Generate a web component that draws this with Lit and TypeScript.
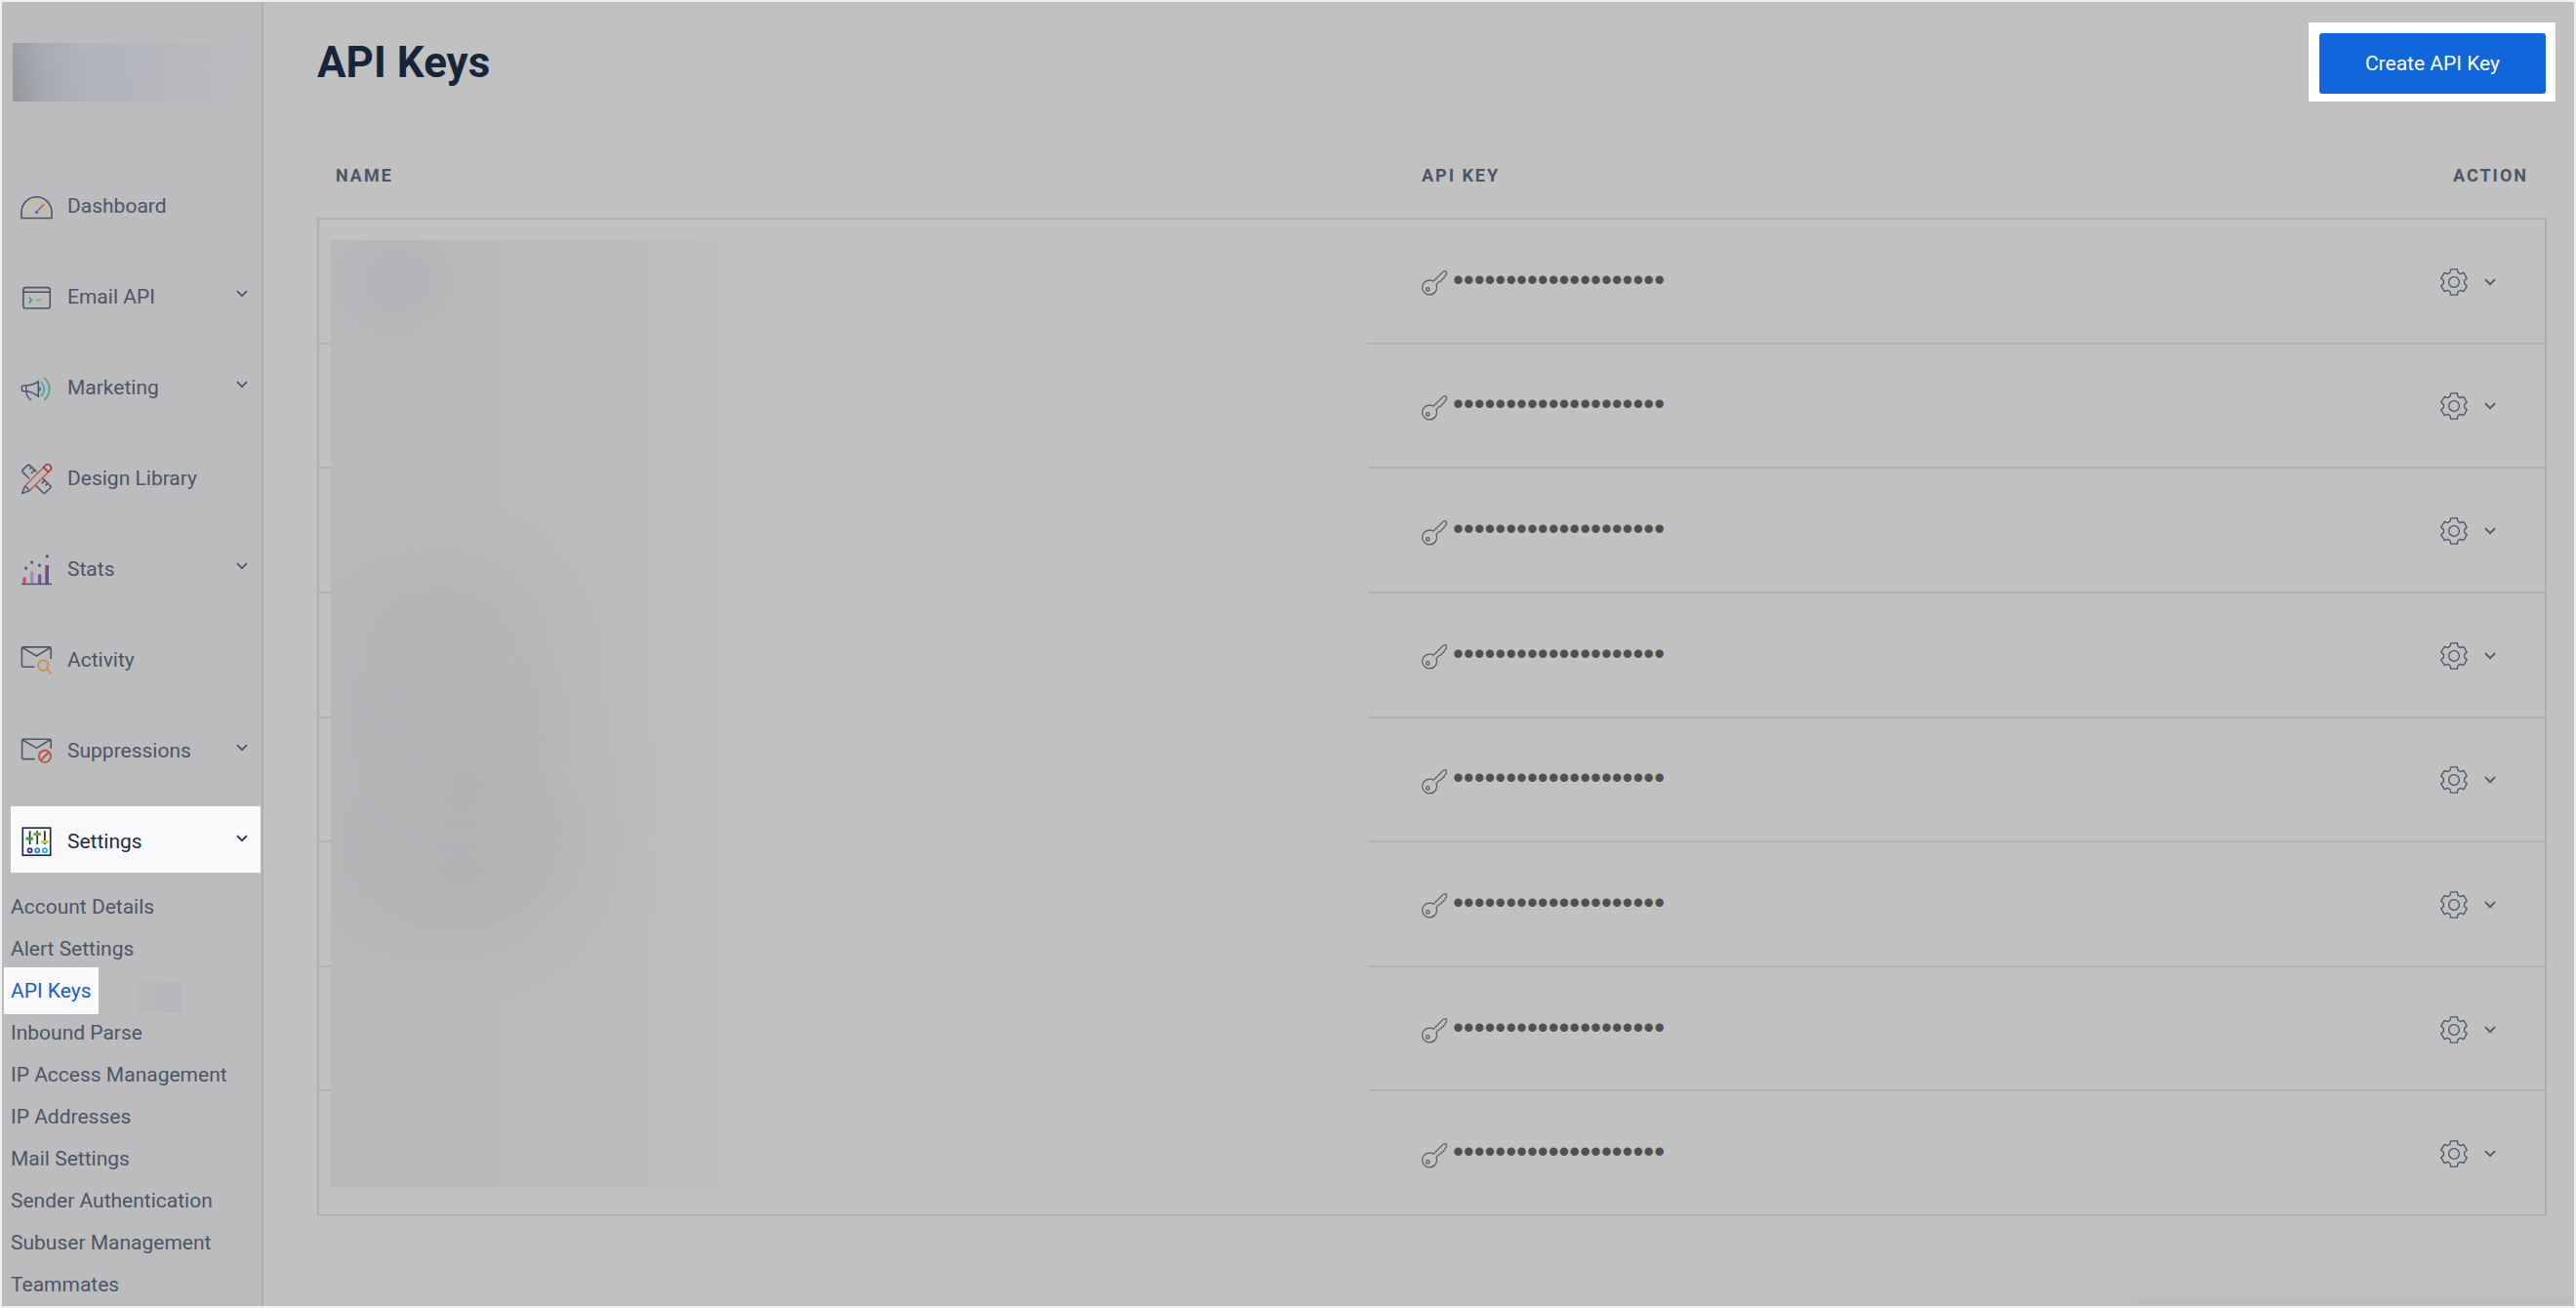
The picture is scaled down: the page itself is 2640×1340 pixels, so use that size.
import { LitElement, html, css, svg, nothing } from "lit";
import { customElement, property, state } from "lit/decorators.js";
import { classMap } from "lit/directives/class-map.js";

const ink = "#4b5666";

const icons: Record<string, unknown> = {
  dashboard: svg`
    <path d="M1 29.5V23.5A15.5 15.75 0 0 1 32 23.5V29.5Z" fill="none" stroke=${ink} stroke-width="1.6"/>
    <g fill="#d9c24a"><circle cx="5.7" cy="24" r="1.3"/><circle cx="6.8" cy="19.3" r="1"/><circle cx="9.2" cy="16" r="1"/><circle cx="12.3" cy="13.4" r="1.1"/><circle cx="16.4" cy="12.6" r="1.6"/><circle cx="20.4" cy="13.4" r="1.1"/><circle cx="26" cy="19.3" r="1"/><circle cx="27.3" cy="24" r="1.3"/></g>
    <path d="M16.4 23.2L24 15.4" stroke="#c25a4e" stroke-width="1.6"/>
    <circle cx="16.4" cy="23.4" r="1.7" fill="#3f74c4"/>`,
  email: svg`
    <rect x="2.9" y="7.6" width="27.4" height="21.2" rx="2.4" fill="none" stroke=${ink} stroke-width="1.6"/>
    <path d="M3 12.2H30" stroke=${ink} stroke-width="1.6"/>
    <path d="M8.6 17.6L11.4 20.5L8.6 23.4" fill="none" stroke="#35a35c" stroke-width="1.7"/>
    <path d="M15.3 20.5H21.3" stroke="#7fb044" stroke-width="1.5"/>`,
  marketing: svg`
    <path d="M5.8 15V20.5C6 25 8 28 11.2 29.8" fill="none" stroke="#5a4fa0" stroke-width="1.5"/>
    <path d="M5.8 14.9H3C1.8 14.9 1.4 15.6 1.4 16.6V19C1.4 20.2 2 20.8 3 20.8H5.8" fill="none" stroke=${ink} stroke-width="1.5"/>
    <path d="M5.8 14.9C10 14.6 14.6 13.4 18.3 10.8V26.2C14.6 23.2 10 21.2 5.8 20.8" fill="none" stroke=${ink} stroke-width="1.5"/>
    <path d="M18.9 16.2A2.4 2.4 0 0 1 18.9 21Z" fill="#3f74c4"/>
    <path d="M21 11.3Q27.6 18.6 21 26" fill="none" stroke="#4a9db0" stroke-width="1.5"/>
    <path d="M24.4 6.8Q35 18.4 24.4 30" fill="none" stroke="#45a765" stroke-width="1.6"/>`,
  design: svg`
    <g fill="none" stroke=${ink} stroke-width="1.5" stroke-linejoin="round">
      <path d="M9 17.2L2 10.4Q1.2 9.4 2 8.6L7.6 3.4Q8.6 2.8 9.4 3.6L16.4 10.4"/>
      <path d="M15.6 24.4L23.4 32Q24.3 32.8 25.2 32L30.6 26.8Q31.4 25.8 30.6 24.8L23 17.2"/>
      <path d="M11.2 5.8L9.2 7.8M14.2 8.8L11 12M24.6 19.4L21.6 22.4M27.6 22.4L25.6 24.4"/>
      <path d="M4.7 24.8L1.6 32.6L9.4 29.6M4.7 24.8L9.4 29.6"/>
    </g>
    <g fill="none" stroke="#c5604f" stroke-width="1.5"><path d="M4.7 24.8L23.6 5.7L28.6 10.6L9.4 29.6"/></g>
    <path d="M23.6 5.7L25.7 3.6Q28 1.8 30.4 3.8Q32.6 6.2 30.7 8.5L28.6 10.6Z" fill="none" stroke="#9f4344" stroke-width="1.7"/>`,
  stats: svg`
    <rect x="2.4" y="25.3" width="3.3" height="6.6" fill="#cb4a72"/><rect x="10.1" y="19.3" width="3.2" height="12.6" fill="#ae85b8"/>
    <rect x="18.1" y="22.3" width="3.2" height="9.6" fill="#6a4fc0"/><rect x="25.4" y="13" width="3.5" height="18.9" fill="#77458f"/>
    <path d="M1 32.4H32" stroke=${ink} stroke-width="1.5"/>
    <g fill=${ink}><circle cx="5.6" cy="16.1" r="1.6"/><circle cx="11.7" cy="10.1" r="1.6"/><circle cx="19.5" cy="13.1" r="1.6"/><circle cx="27.3" cy="3.8" r="1.6"/></g>`,
  activity: svg`
    <path d="M31.2 16V5.4Q31.2 3.9 29.7 3.9H3Q1.4 3.9 1.4 5.4V22.6Q1.4 24.2 3 24.2H14.3M2 4.4L16.4 13L30.7 4.4" fill="none" stroke=${ink} stroke-width="1.6"/>
    <circle cx="23.3" cy="22.6" r="5.2" fill="none" stroke="#d08b45" stroke-width="1.8"/>
    <path d="M27 26.3L31.6 31" stroke="#d08b45" stroke-width="1.8"/>`,
  suppressions: svg`
    <path d="M31.2 14.8V6.6Q31.2 5.2 29.7 5.2H3Q1.6 5.2 1.6 6.6V24.2Q1.6 25.6 3 25.6H14.6M2 5.8L16.4 14.4L30.7 5.8" fill="none" stroke=${ink} stroke-width="1.6"/>
    <circle cx="24.9" cy="22.8" r="6.1" fill="none" stroke="#be5347" stroke-width="1.9"/>
    <path d="M20.8 27L29 18.6" stroke="#be5347" stroke-width="1.9"/>`,
  settings: svg`
    <rect x="2.3" y="3.2" width="28.4" height="28" fill="#fff" stroke="#1e2f45" stroke-width="1.7"/>
    <path d="M9.6 6.2V20M17.2 6.2V20M24.9 6.2V20" stroke="#1e2f45" stroke-width="1.7"/>
    <path d="M5.6 14.2H13" stroke="#3aa537" stroke-width="3"/><path d="M13.4 9.6H21" stroke="#6fae1d" stroke-width="3"/><path d="M21.2 17.4H28.5" stroke="#c3cf22" stroke-width="3"/>
    <g fill="#fff" stroke-width="1.8"><circle cx="9.6" cy="26.3" r="2.1" stroke="#3a2a90"/><circle cx="17.2" cy="26.3" r="2.1" stroke="#2a7de8"/><circle cx="24.9" cy="26.3" r="2.1" stroke="#20b2c8"/></g>`,
};

interface NavEntry { id: string; label: string; menu: boolean }

const nav: NavEntry[] = [
  { id: "dashboard", label: "Dashboard", menu: false },
  { id: "email", label: "Email API", menu: true },
  { id: "marketing", label: "Marketing", menu: true },
  { id: "design", label: "Design Library", menu: false },
  { id: "stats", label: "Stats", menu: true },
  { id: "activity", label: "Activity", menu: false },
  { id: "suppressions", label: "Suppressions", menu: true },
  { id: "settings", label: "Settings", menu: true },
];

const settingsPages = [
  "Account Details", "Alert Settings", "API Keys", "Inbound Parse", "IP Access Management",
  "IP Addresses", "Mail Settings", "Sender Authentication", "Subuser Management", "Teammates",
];

const chevron = html`<svg class="chevron" viewBox="0 0 12 8" width="12" height="8" aria-hidden="true"><path d="M1 1.2L6 6.2L11 1.2" fill="none" stroke="currentColor" stroke-width="1.7"/></svg>`;

@customElement("side-nav")
class SideNav extends LitElement {
  @property() current = "API Keys";
  @state() private open = "settings";

  static styles = css`
    :host { display: flex; flex-direction: column; box-sizing: border-box; width: 268px; flex: none; background: #bcbcbe; border-right: 2px solid #acafb3; color: #4b5666; font-size: 21px; line-height: 24px; }
    .brand { height: 60px; margin: 42px 17px 71px 11px; background: linear-gradient(165deg, rgba(178, 184, 196, 0.35), rgba(188, 188, 190, 0) 80%), linear-gradient(90deg, #8f9194, #a5a8ac 14%, #b0b3b9 32%, #b6b7bc 60%, #bcbcbf); }
    .items, .pages { list-style: none; margin: 0; padding: 0; }
    .items { display: flex; flex-direction: column; gap: 25px; margin: 0 1px 0 9px; }
    .item { box-sizing: border-box; width: 100%; height: 68px; display: flex; align-items: center; gap: 14px; padding: 0 13px 0 10px; border: 0; background: none; color: inherit; font: inherit; text-decoration: none; text-align: left; cursor: pointer; }
    .item.on { background: #fafafd; color: #1e2f45; }
    .icon { flex: none; margin-top: 4px; }
    .label { flex: 1; padding-top: 3px; }
    .chevron { margin-bottom: 2px; }
    .pages { flex: 1; display: grid; grid-auto-rows: 1fr; margin-top: 13px; }
    .pages li { display: flex; align-items: center; gap: 40px; padding-left: 2px; min-height: 0; height: 43px; }
    .page { padding: 12px 7px; color: inherit; text-decoration: none; white-space: nowrap; }
    .page.on { background: #fafafd; color: #1560d0; }
    .patch { width: 45px; height: 32px; margin-top: 14px; background: linear-gradient(90deg, #b8b9bb, #b5b6b9); }
  `;

  render() {
    return html`
      <div class="brand"></div>
      <ul class="items">
        ${nav.map((n) => {
          const cls = classMap({ item: true, on: n.id === "settings" });
          const icon = html`<svg class="icon" viewBox="0 0 34 34" width="34" height="34" aria-hidden="true">${icons[n.id]}</svg>`;
          return html`<li>${n.menu
            ? html`<button class=${cls} type="button" aria-expanded=${this.open === n.id} @click=${() => (this.open = n.id)}>${icon}<span class="label">${n.label}</span>${chevron}</button>`
            : html`<a class=${cls} href="#${n.id}">${icon}<span class="label">${n.label}</span></a>`}</li>`;
        })}
      </ul>
      <ul class="pages">
        ${settingsPages.map((p) => html`<li>
          <a class=${classMap({ page: true, on: p === this.current })} href="#${p.toLowerCase().replace(/ /g, "-")}">${p}</a>
          ${p === this.current ? html`<span class="patch"></span>` : nothing}
        </li>`)}
      </ul>`;
  }
}

@customElement("key-table")
class KeyTable extends LitElement {
  @property({ type: Number }) count = 8;

  static styles = css`
    :host { display: grid; position: relative; }
    .keys { width: 100%; height: 100%; table-layout: fixed; border-collapse: collapse; }
    .name { width: 48.75%; }
    .action { width: 10%; }
    th { box-sizing: border-box; height: 120px; padding: 55px 18px 0; vertical-align: top; text-align: left; font-size: 18px; line-height: 42px; font-weight: 700; letter-spacing: 2px; color: #4b5666; }
    th:last-child { text-align: right; }
    tbody { border: 2px solid #abafb0; }
    td { padding: 2px 18px 0; border-bottom: 2px solid #afb2b2; }
    .secret { display: flex; align-items: center; gap: 6px; color: #505050; }
    .keyicon { flex: none; margin-top: 3px; }
    .dots { padding-bottom: 4px; font-family: "Liberation Sans", Arial, sans-serif; font-size: 31px; line-height: 32px; }
    .tools { display: flex; justify-content: flex-end; }
    .gear { display: flex; align-items: center; gap: 17px; padding: 0 32px 0 0; border: 0; background: none; color: #4b5666; cursor: pointer; }
    .gear svg { display: block; }
    .cover { position: absolute; top: 142px; bottom: 30px; left: 14px; width: 1063px; max-width: 47%;
      background:
        radial-gradient(ellipse 90px 80px at 68px 42px, rgba(172, 174, 180, 0.5), rgba(172, 174, 180, 0)),
        radial-gradient(ellipse 190px 160px at 125px 425px, rgba(166, 168, 172, 0.38), rgba(166, 168, 172, 0)),
        radial-gradient(ellipse 200px 150px at 140px 560px, rgba(166, 168, 172, 0.36), rgba(166, 168, 172, 0)),
        radial-gradient(ellipse 200px 130px at 136px 655px, rgba(166, 168, 172, 0.36), rgba(166, 168, 172, 0)),
        linear-gradient(90deg, #b8b9bb, #bababa 15%, #bcbcbc 28%, #bebebe 35%, #c0c0c0 43%); }
  `;

  render() {
    return html`
      <table class="keys">
        <colgroup><col class="name"><col><col class="action"></colgroup>
        <thead><tr><th scope="col">NAME</th><th scope="col">API KEY</th><th scope="col">ACTION</th></tr></thead>
        <tbody>
          ${Array.from({ length: this.count }, () => html`<tr>
            <td></td>
            <td><div class="secret">
              <svg class="keyicon" viewBox="0 0 26 26" width="26" height="26" aria-hidden="true">
                <g fill="none" stroke="#5c5c5c" stroke-width="1.2" stroke-linejoin="round">
                  <path d="M12 11.2L22 1.4Q22.5 .8 23.2 .8H24.6Q25.3 .8 25.3 1.6V4.4L23.2 6.6L22.6 8.6L20.6 9L20 11L18 11.4L14.9 14.6A7.4 7.4 0 1 1 12 11.2Z"/>
                  <circle cx="6.2" cy="19.4" r="1.7"/>
                </g>
              </svg>
              <span class="dots">••••••••••••••••••••</span>
            </div></td>
            <td><div class="tools">
              <button class="gear" type="button" aria-label="Key actions">
                <svg viewBox="0 0 28 28" width="28" height="28"><g fill="none" stroke="currentColor" stroke-width="1.3" stroke-linejoin="round">
                  <path d="M10.6 .8H17.4L18 4.2L20.6 5.6L23.8 4.4L27.2 10.2L24.6 12.5V15.5L27.2 17.8L23.8 23.6L20.6 22.4L18 23.8L17.4 27.2H10.6L10 23.8L7.4 22.4L4.2 23.6L.8 17.8L3.4 15.5V12.5L.8 10.2L4.2 4.4L7.4 5.6L10 4.2Z"/>
                  <circle cx="14" cy="14" r="5.4"/></g></svg>
                ${chevron}
              </button>
            </div></td>
          </tr>`)}
        </tbody>
      </table>
      <div class="cover"></div>`;
  }
}

@customElement("app-root")
class AppRoot extends LitElement {
  static styles = css`
    :host { display: flex; box-sizing: border-box; min-height: 100vh; border: 2px solid #efefef; position: relative; overflow: hidden; background: #c1c1c1; font-family: Roboto, "Liberation Sans", sans-serif; }
    .main { flex: 1; min-width: 0; display: flex; flex-direction: column; }
    .head { display: flex; justify-content: space-between; align-items: flex-start; padding: 21px 19px 0 55px; }
    .title { margin: 13px 0 0; font-size: 44px; line-height: 56px; font-weight: 700; color: #17253a; }
    .spot { padding: 11px 10px 8px 11px; background: #fff; }
    .create { display: block; min-width: 232px; height: 62px; border: 0; border-radius: 3px; background: #1166dc; color: #fff; font: inherit; font-size: 21px; line-height: 24px; cursor: pointer; }
    .list { flex: 1; margin: 0 28px 92px 55px; }
    .drawer { position: absolute; right: 0; bottom: 0; width: 460px; height: 2px; border-radius: 6px 0 0 0; background: #c1c1c1; box-shadow: 4px 0 14px rgba(0, 0, 0, 0.28); }
  `;

  render() {
    return html`
      <side-nav></side-nav>
      <main class="main">
        <header class="head">
          <h1 class="title">API Keys</h1>
          <div class="spot"><button class="create" type="button">Create API Key</button></div>
        </header>
        <key-table class="list"></key-table>
      </main>
      <div class="drawer"></div>`;
  }
}
